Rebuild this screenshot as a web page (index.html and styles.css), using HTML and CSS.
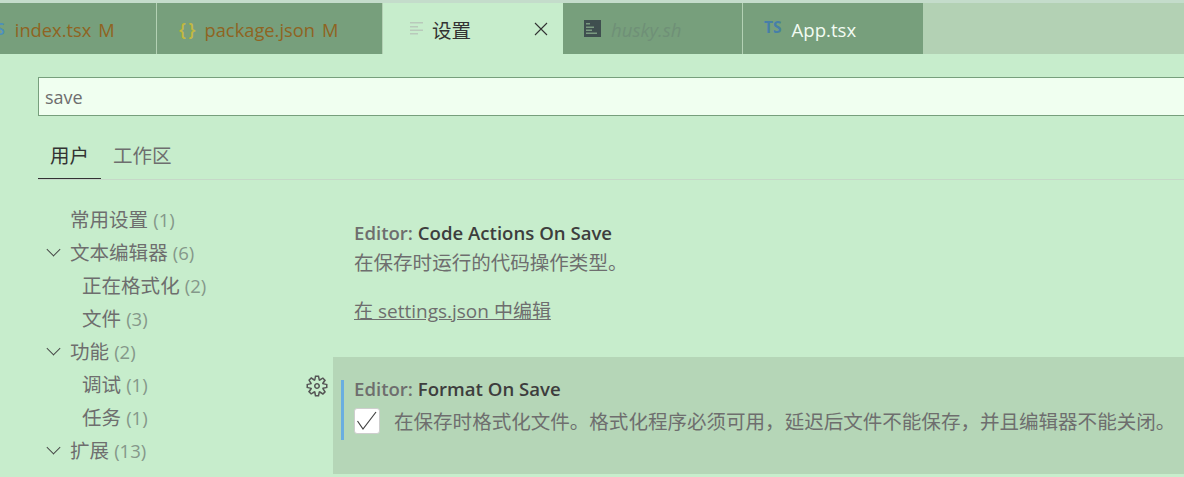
FILE: index.html
```html
<!DOCTYPE html>
<html lang="zh-CN">
<head>
  <meta charset="UTF-8">
  <title>设置</title>
  <link rel="stylesheet" href="styles.css">
</head>
<body>
  <div class="tabs">
    <div class="tab tab-index">
      <span class="ts-cut">S</span>
      <span class="tab-name modified">index.tsx</span>
      <span class="tab-m">M</span>
    </div>
    <div class="tab tab-package">
      <span class="braces">{ }</span>
      <span class="tab-name modified">package.json</span>
      <span class="tab-m">M</span>
    </div>
    <div class="tab tab-active">
      <svg class="file-lines" width="16" height="16" viewBox="0 0 16 16">
        <path d="M1 1h13v1.500H1zM1 5h8v1.500H1zM1 8.500h13V10H1zM1 12h8v1.500H1z" fill="#b9c9bb"/>
      </svg>
      <span class="tab-name">设置</span>
      <svg class="close" width="16" height="16" viewBox="0 0 16 16">
        <path d="M2 2l12 12M14 2L2 14" stroke="#333" stroke-width="1.100" fill="none"/>
      </svg>
    </div>
    <div class="tab tab-husky">
      <svg width="17" height="17" viewBox="0 0 17 17">
        <rect width="17" height="17" fill="#3f4f4f"/>
        <path d="M2 3h4v1.500H2zM2 6.500h8V8H2zM2 9.500h6V11H2zM2 12.500h11V14H2z" fill="#7a9a80"/>
      </svg>
      <span class="tab-name faded">husky.sh</span>
    </div>
    <div class="tab tab-app">
      <span class="ts">TS</span>
      <span class="tab-name light">App.tsx</span>
    </div>
  </div>

  <div class="search">save</div>

  <div class="scope">
    <div class="scope-item current">用户</div>
    <div class="scope-item">工作区</div>
  </div>

  <div class="body">
    <ul class="toc">
      <li>常用设置 <span>(1)</span></li>
      <li class="group">文本编辑器 <span>(6)</span></li>
      <li class="sub">正在格式化 <span>(2)</span></li>
      <li class="sub">文件 <span>(3)</span></li>
      <li class="group">功能 <span>(2)</span></li>
      <li class="sub">调试 <span>(1)</span></li>
      <li class="sub">任务 <span>(1)</span></li>
      <li class="group">扩展 <span>(13)</span></li>
    </ul>

    <div class="settings">
      <div class="setting first">
        <div class="setting-title">Editor: <b>Code Actions On Save</b></div>
        <div class="setting-desc">在保存时运行的代码操作类型。</div>
        <a class="setting-link">在 settings.json 中编辑</a>
      </div>
      <div class="setting focused">
        <svg class="gear" width="24" height="24" viewBox="0 0 16 16">
          <path fill-rule="evenodd" d="M9.100 4.400L8.600 2H7.400l-.5 2.400-.7.3-2-1.300-.9.8 1.300 2-.2.7-2.400.5v1.200l2.400.5.3.8-1.300 2 .8.8 2-1.300.8.3.4 2.300h1.200l.5-2.400.8-.3 2 1.300.8-.8-1.300-2 .3-.8 2.300-.4V7.400l-2.400-.5-.3-.8 1.300-2-.8-.8-2 1.300-.7-.2zM9.400 1l.5 2.400L12 2.100l2 2-1.400 2.100 2.400.4v2.800l-2.400.5L14 12l-2 2-2.100-1.400-.5 2.400H6.600l-.5-2.400L4 13.900l-2-2 1.400-2.100L1 9.400V6.600l2.400-.5L2.100 4l2-2 2.100 1.400.4-2.400h2.800zm.6 7c0 1.100-.9 2-2 2s-2-.9-2-2 .9-2 2-2 2 .9 2 2zM8 9c.6 0 1-.4 1-1s-.4-1-1-1-1 .4-1 1 .4 1 1 1z" fill="#555"/>
        </svg>
        <div class="focus-bar">
          <div class="setting-title">Editor: <b>Format On Save</b></div>
          <div class="check-row">
            <span class="checkbox">
              <svg width="22" height="22" viewBox="0 0 22 22">
                <path d="M1.500 11l5.500 8L20 2" fill="none" stroke="#444" stroke-width="1.200"/>
              </svg>
            </span>
            <span class="setting-desc">在保存时格式化文件。格式化程序必须可用，延迟后文件不能保存，并且编辑器不能关闭。</span>
          </div>
        </div>
      </div>
    </div>
  </div>
</body>
</html>
```

FILE: styles.css
```css
html, body {
  margin: 0;
  height: 477px;
  overflow: hidden;
}
body {
  background: #c7edcc;
  color: #6e6e6e;
  font-family: "Open Sans", "Noto Sans CJK SC", sans-serif;
  font-size: 19.550px;
}
.tabs {
  display: flex;
  height: 51px;
  margin-top: 3px;
  background: #b3d1b4;
  box-shadow: 0 -3px 0 #c4dccb;
}
.tab {
  display: flex;
  align-items: center;
  flex: none;
  box-sizing: border-box;
  height: 51px;
  background: #779f7c;
  border-right: 1px solid #b3d1b4;
  font-size: 18.300px;
}
.tab-name { padding-top: 2px; }
.tab-index { width: 157px; }
.tab-package { width: 226px; padding-left: 22px; }
.tab-active {
  width: 180px;
  padding-left: 26px;
  background: #c7edcc;
  color: #333;
  border-right: 0;
  font-size: 19.550px;
}
.tab-husky { width: 180px; padding-left: 21px; }
.tab-app { width: 180px; padding-left: 21px; border-right: 0; }
.ts-cut {
  margin-left: -4px;
  margin-right: 10px;
  color: #4a8fbf;
  font-size: 16px;
  font-weight: 600;
}
.braces {
  margin-right: 10px;
  color: #c3b93e;
  font-size: 18px;
  font-weight: 600;
  letter-spacing: -1px;
}
.modified { color: #8f6422; }
.tab-m { margin: 2px 0 0 7px; color: #8f6422; }
.file-lines { margin-right: 7px; }
.close { margin-left: auto; margin-right: 14px; }
.tab-husky svg { margin-right: 10px; }
.faded { color: #6f9077; font-style: italic; font-size: 18.600px; }
.light { color: #f2fbf2; font-size: 18.600px; }
.ts {
  margin: -3px 10px 0 0;
  color: #467fa8;
  font-size: 15.500px;
  font-weight: 700;
}

.search {
  box-sizing: border-box;
  height: 39px;
  margin: 23px 0 0 38px;
  padding-left: 6px;
  border: 1px solid #779f7c;
  border-right: 0;
  background: #f0fff0;
  font-size: 18px;
  line-height: 39px;
}

.scope {
  display: flex;
  height: 45px;
  margin: 18px 0 0 38px;
  border-bottom: 1px solid #c6d8c8;
}
.scope-item {
  box-sizing: border-box;
  height: 45px;
  padding: 0 12px;
  line-height: 44px;
  white-space: nowrap;
}
.scope-item.current {
  width: 63px;
  color: #333;
  border-bottom: 1px solid #333;
}

.body {
  display: flex;
}
.toc {
  flex: none;
  width: 333px;
  margin: 23px 0 0;
  padding: 0;
  list-style: none;
}
.toc li {
  position: relative;
  height: 33px;
  padding-left: 70px;
  line-height: 33px;
}
.toc li span { color: #85988a; font-size: 18.500px; }
.toc li.sub { padding-left: 82px; }
.toc li.group::before {
  content: "";
  position: absolute;
  left: 48px;
  top: 8px;
  width: 10px;
  height: 10px;
  border-right: 1.500px solid #444;
  border-bottom: 1.500px solid #444;
  transform: rotate(45deg) scale(.9);
}

.settings {
  flex: 1;
  min-width: 0;
}
.setting-title { color: #6e6e6e; font-size: 18.600px; font-weight: 600; }
.setting-title b { color: #3d3d3d; font-weight: 600; }
.setting.first {
  box-sizing: border-box;
  height: 177px;
  padding: 39px 0 0 21px;
}
.setting.first .setting-title { line-height: 27px; }
.setting.first .setting-desc { line-height: 33px; }
.setting-link {
  display: inline-block;
  margin-top: 17px;
  color: #6e6e6e;
  font-size: 19px;
  text-decoration: underline;
}
.setting.focused {
  position: relative;
  box-sizing: border-box;
  height: 117px;
  padding: 23px 0 0 8px;
  background: #b5d6b7;
}
.gear {
  position: absolute;
  left: -28.500px;
  top: 17px;
}
.focus-bar {
  height: 60px;
  padding-left: 10px;
  border-left: 3px solid #6aaee0;
}
.focus-bar .setting-title { line-height: 17px; }
.check-row {
  display: flex;
  align-items: center;
  margin-top: 9px;
  white-space: nowrap;
}
.checkbox {
  flex: none;
  display: flex;
  align-items: center;
  justify-content: center;
  box-sizing: border-box;
  width: 26px;
  height: 26px;
  margin-right: 14px;
  background: #fff;
  border: 1px solid #cecece;
  border-radius: 3px;
}
```
